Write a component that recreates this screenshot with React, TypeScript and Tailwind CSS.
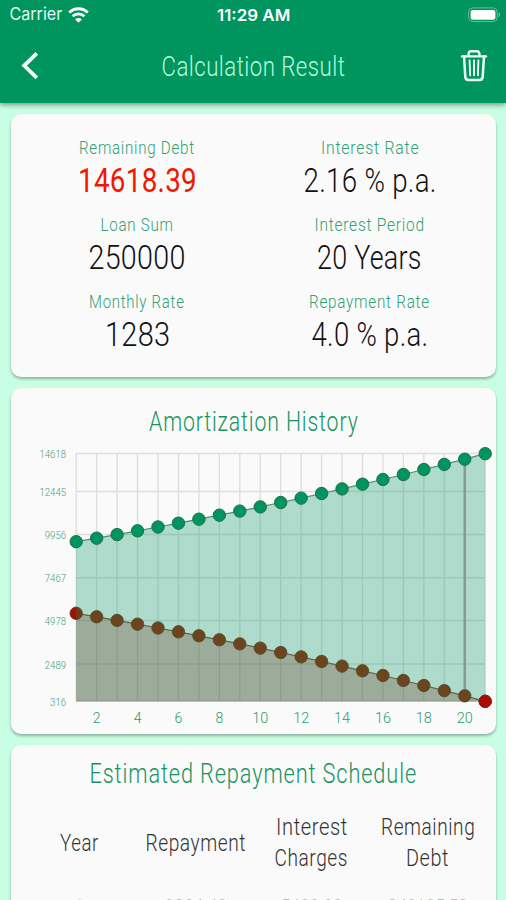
import { useLayoutEffect, useRef } from "react";

interface FitTextProps {
  width: number;
  className?: string;
  children: string;
}

// Condenses a line of text to the given width
function FitText({ width, className = "", children }: FitTextProps) {
  const ref = useRef<HTMLSpanElement>(null);

  useLayoutEffect(() => {
    const el = ref.current;
    if (el) el.style.transform = `scaleX(${width / el.offsetWidth})`;
  }, [width, children]);

  return (
    <span className="flex justify-center" style={{ width }}>
      <span ref={ref} className={`block shrink-0 whitespace-nowrap ${className}`}>
        {children}
      </span>
    </span>
  );
}

const SUMMARY = [
  { label: "Remaining Debt", labelWidth: 116, value: "14618.39", valueWidth: 119, highlight: true },
  { label: "Interest Rate", labelWidth: 98, value: "2.16 % p.a.", valueWidth: 133 },
  { label: "Loan Sum", labelWidth: 73, value: "250000", valueWidth: 97 },
  { label: "Interest Period", labelWidth: 110, value: "20 Years", valueWidth: 105 },
  { label: "Monthly Rate", labelWidth: 96, value: "1283", valueWidth: 65 },
  { label: "Repayment Rate", labelWidth: 121, value: "4.0 % p.a.", valueWidth: 117 },
];

const COLUMNS = [
  [{ text: "Year", width: 39 }],
  [{ text: "Repayment", width: 101 }],
  [{ text: "Interest", width: 72 }, { text: "Charges", width: 74 }],
  [{ text: "Remaining", width: 94 }, { text: "Debt", width: 43 }],
];

const FIRST_ROW = [
  { text: "1", width: 7 },
  { text: "9804.48", width: 62 },
  { text: "5400.00", width: 61 },
  { text: "240195.52", width: 80 },
];

const Y_TICKS = [
  { label: "14618", y: 13.5 },
  { label: "12445", y: 51.5 },
  { label: "9956", y: 94.5 },
  { label: "7467", y: 137.7 },
  { label: "4978", y: 180.5 },
  { label: "2489", y: 224 },
  { label: "316", y: 261 },
];

const REPAYMENT = [
  101.7, 98.2, 94.6, 90.8, 87, 83.2, 79.2, 75.2, 71.1, 66.9, 62.5,
  58.1, 53.5, 48.9, 44.2, 39.5, 34.5, 29.5, 24.4, 19.2, 13.7,
];
const INTEREST = REPAYMENT.map((y) => 275 - y);
const LEFT = 65.2;
const STEP = 20.45;
const BOTTOM = 261.5;

const xAt = (i: number) => LEFT + i * STEP;
const toPoints = (ys: number[]) => ys.map((y, i) => `${xAt(i)},${y}`).join(" ");
const toArea = (ys: number[]) => `${LEFT},${BOTTOM} ${toPoints(ys)} ${xAt(20)},${BOTTOM}`;

function AmortizationChart() {
  return (
    <svg width="485" height="294" viewBox="0 0 485 294" className="block overflow-visible">
      <g stroke="#dedede" strokeWidth="1.4">
        {REPAYMENT.map((_, i) => (
          <line key={i} x1={xAt(i)} x2={xAt(i)} y1={13.5} y2={BOTTOM} />
        ))}
        {Y_TICKS.map((t) => (
          <line key={t.label} x1={LEFT} x2={xAt(20)} y1={t.y} y2={t.y} />
        ))}
      </g>

      <polygon points={toArea(INTEREST)} fill="#a00a00" fillOpacity="0.28" />
      <polyline points={toPoints(INTEREST)} fill="none" stroke="#8d4a3c" strokeWidth="1.2" />
      {INTEREST.map((y, i) => (
        <circle key={i} cx={xAt(i)} cy={y} r="6.2" fill={i === 0 ? "#a31000" : "#9b2200"} stroke="#6e3018" strokeWidth="0.9" />
      ))}

      <polygon points={toArea(REPAYMENT)} fill="#00945f" fillOpacity="0.3" />
      <line x1={xAt(19)} x2={xAt(19)} y1={19} y2={250} stroke="#66706a" strokeOpacity="0.5" strokeWidth="2.6" />
      <polyline points={toPoints(REPAYMENT)} fill="none" stroke="#4c8f76" strokeWidth="1.2" />
      {REPAYMENT.map((y, i) => (
        <circle key={i} cx={xAt(i)} cy={y} r="6.2" fill="#00945f" stroke="#1f6f50" strokeWidth="1" />
      ))}
      <circle cx={xAt(20)} cy={INTEREST[20]} r="6.2" fill="#ad0c00" stroke="#7c2416" strokeWidth="0.9" />

      <g fill="#3f9f7b" fontSize="10.5" fontWeight="300" textAnchor="end">
        {Y_TICKS.map((t) => (
          <text
            key={t.label}
            x="55"
            y={t.y + 4.5}
            textLength={t.label.length * 5.3}
            lengthAdjust="spacingAndGlyphs"
          >
            {t.label}
          </text>
        ))}
      </g>
      <g fill="#2a9a70" fontSize="15.5" fontWeight="300" textAnchor="middle">
        {[2, 4, 6, 8, 10, 12, 14, 16, 18, 20].map((n) => (
          <text
            key={n}
            x={xAt(n - 1)}
            y="283.3"
            textLength={n < 10 ? 7.8 : 16}
            lengthAdjust="spacingAndGlyphs"
          >
            {n}
          </text>
        ))}
      </g>
    </svg>
  );
}

function WifiIcon() {
  return (
    <svg width="21" height="16" viewBox="0 0 21 16" fill="none" stroke="#fff" strokeWidth="2.8">
      <path d="M1.2 5.6a13.2 13.2 0 0 1 18.6 0" />
      <path d="M4.6 9.2a8.4 8.4 0 0 1 11.8 0" />
      <path d="M10.5 15.7 7.2 12.4a4.7 4.7 0 0 1 6.6 0z" fill="#fff" stroke="none" />
    </svg>
  );
}

function BatteryIcon() {
  return (
    <svg width="33" height="16" viewBox="0 0 33 16">
      <rect x="0.6" y="0.9" width="28.6" height="13.6" rx="4" fill="none" stroke="#62bd9c" strokeWidth="1" />
      <rect x="2.6" y="2.9" width="24.8" height="9.8" rx="2.2" fill="#fff" />
      <path d="M30.6 5.2a2.8 2.8 0 0 1 0 5z" fill="#62bd9c" />
    </svg>
  );
}

function TrashIcon() {
  return (
    <svg width="28" height="34" viewBox="0 0 28 34" fill="none" stroke="#e9fff5" strokeLinecap="round" strokeLinejoin="round">
      <path d="M2 7.4h24" strokeWidth="2.4" />
      <path d="M8.6 7V4.8a2.6 2.6 0 0 1 2.6-2.6h5.6a2.6 2.6 0 0 1 2.6 2.6V7" strokeWidth="2.4" />
      <path d="M4 7.5l1.3 20.4a3.2 3.2 0 0 0 3.2 3h11a3.2 3.2 0 0 0 3.2-3L24 7.5" strokeWidth="2.5" />
      <path d="M9.6 11.5l.5 14.7M14 11.5v14.7M18.4 11.5l-.5 14.7" strokeWidth="1.9" />
    </svg>
  );
}

export default function App() {
  return (
    <div className="flex h-[900px] w-[506px] flex-col overflow-hidden bg-[#c8ffe4] font-['Roboto',sans-serif] font-light">
      <header className="z-10 h-[103px] shrink-0 bg-[#00945f] shadow-[0_2px_5px_rgba(0,0,0,0.4)]">
        <div className="grid h-7 grid-cols-3 items-center pr-[5px] pl-[9px] pt-px text-white">
          <div className="flex items-center gap-1.5">
            <FitText width={53} className="pt-px font-['Inter',sans-serif] text-[17px] font-normal text-[#e2f8ef]">Carrier</FitText>
            <WifiIcon />
          </div>
          <div className="flex justify-center pr-0.5">
            <FitText width={73} className="font-['Inter',sans-serif] text-[16px] font-semibold">11:29 AM</FitText>
          </div>
          <div className="flex justify-end">
            <BatteryIcon />
          </div>
        </div>
        <div className="flex h-[76px] items-center justify-between pr-[18px] pl-5">
          <svg width="20" height="30" viewBox="0 0 20 30" fill="none" stroke="#fff" strokeWidth="3.8">
            <path d="M16.8 2.4 4.2 14.6l12.6 12.2" />
          </svg>
          <h1 className="ml-1.5 pt-0.5">
            <FitText width={184} className="text-[27px] leading-9 tracking-[0.02em] text-[#b5fbdb]">Calculation Result</FitText>
          </h1>
          <TrashIcon />
        </div>
      </header>

      <main className="flex flex-col gap-[11px] px-[11px] pt-[11px] pr-[10px]">
        <section className="grid h-[263px] shrink-0 grid-cols-2 content-start gap-y-[11px] rounded-[10px] bg-[#fafafa] px-2.5 pt-[19px] shadow-[0_2px_3px_rgba(0,0,0,0.3)]">
          {SUMMARY.map((item) => (
            <div key={item.label} className="flex flex-col items-center">
              <FitText width={item.labelWidth} className="text-[19px] leading-[30px] tracking-[0.05em] text-[#2f9f76]">{item.label}</FitText>
              <FitText
                width={item.valueWidth}
                className={`text-[32.5px] leading-9 tracking-[0.01em] ${item.highlight ? "font-normal text-[#f01800]" : "text-[#111]"}`}
              >
                {item.value}
              </FitText>
            </div>
          ))}
        </section>

        <section className="h-[346px] shrink-0 rounded-[10px] bg-[#fafafa] pt-4 shadow-[0_2px_3px_rgba(0,0,0,0.3)]">
          <h2 className="flex justify-center">
            <FitText width={210} className="pt-px text-[27px] leading-[35px] tracking-[0.04em] text-[#16945f]">Amortization History</FitText>
          </h2>
          <AmortizationChart />
        </section>

        <section className="h-[200px] shrink-0 rounded-t-[10px] bg-[#fafafa] px-2.5 pt-[11px] shadow-[0_2px_3px_rgba(0,0,0,0.3)]">
          <h2 className="flex justify-center">
            <FitText width={328} className="text-[27px] leading-9 tracking-[0.04em] text-[#16945f]">Estimated Repayment Schedule</FitText>
          </h2>
          <div className="mt-5 grid h-[62px] grid-cols-4 items-center">
            {COLUMNS.map((lines) => (
              <div key={lines[0].text} className="flex flex-col items-center">
                {lines.map((line) => (
                  <FitText key={line.text} width={line.width} className="text-[23.5px] leading-[31px] tracking-[0.03em] text-[#333]">
                    {line.text}
                  </FitText>
                ))}
              </div>
            ))}
          </div>
          <div className="mt-[18px] grid grid-cols-4">
            {FIRST_ROW.map((cell) => (
              <div key={cell.text} className="flex justify-center">
                <FitText width={cell.width} className="text-[20px] leading-[30px] text-[#bbb]">{cell.text}</FitText>
              </div>
            ))}
          </div>
        </section>
      </main>
    </div>
  );
}
